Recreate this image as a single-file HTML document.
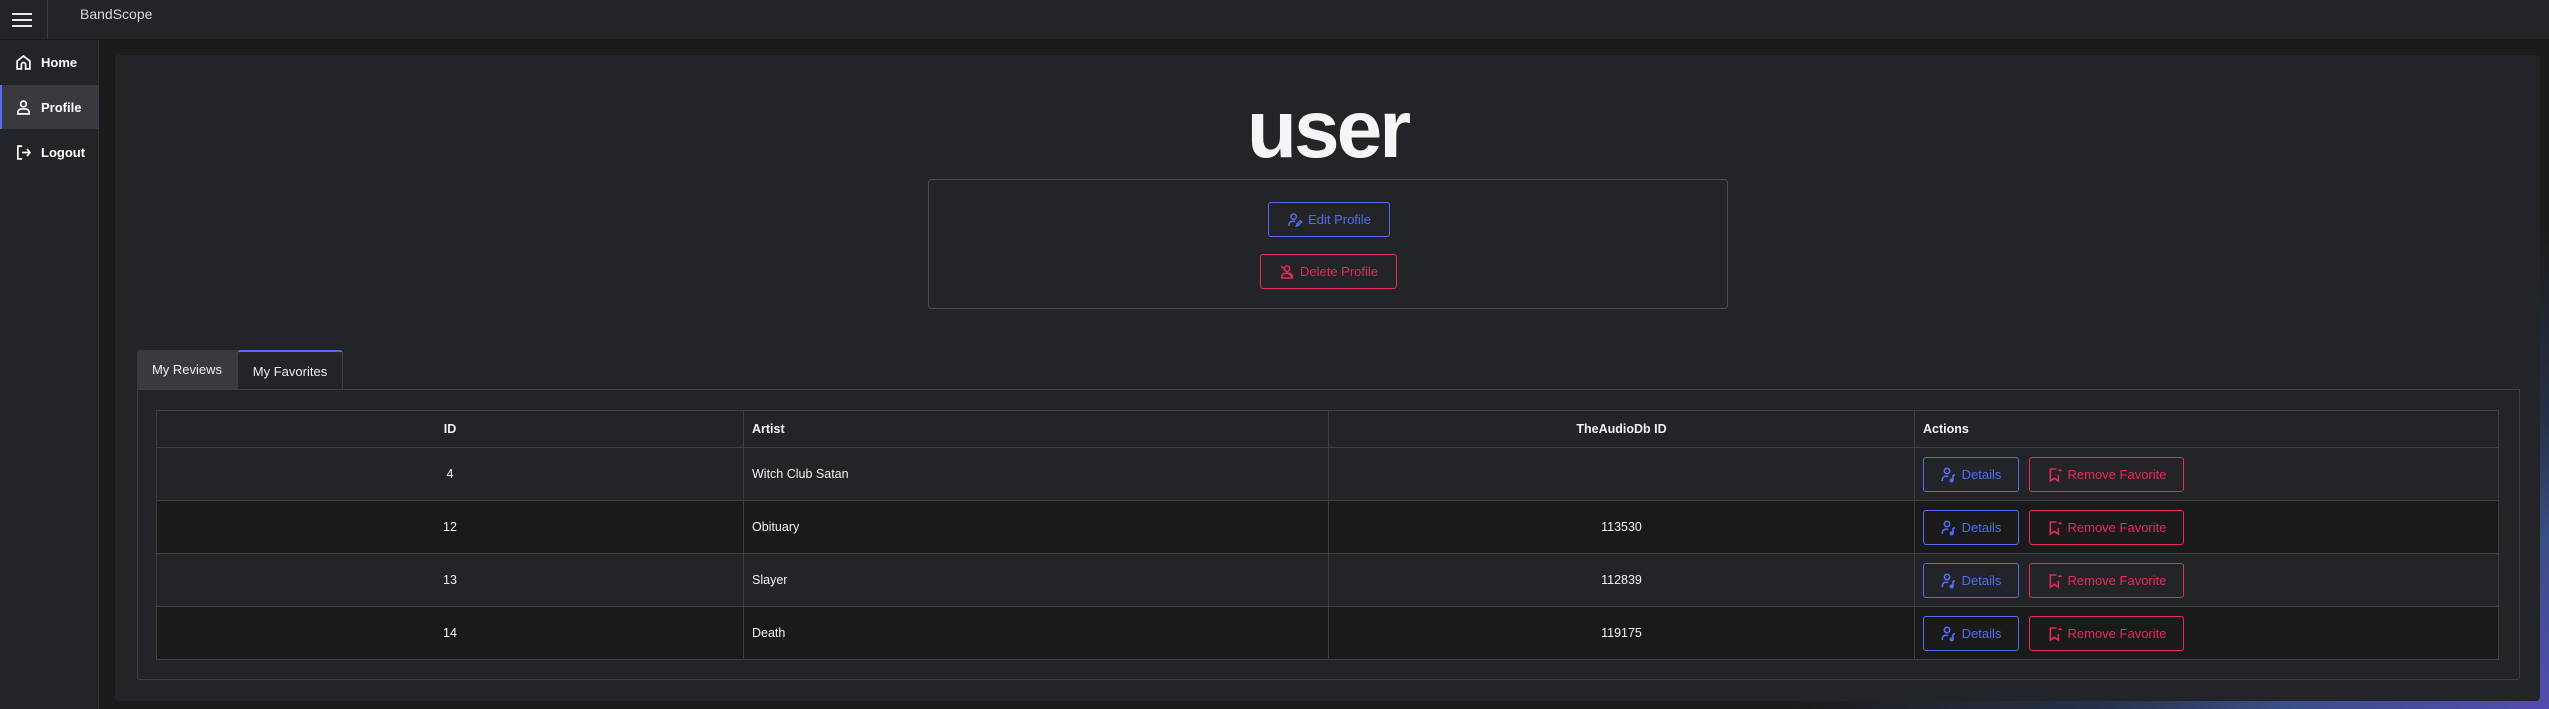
<!DOCTYPE html>
<html><head><meta charset="utf-8"><style>
*{box-sizing:border-box;margin:0;padding:0}
body{width:2549px;height:709px;overflow:hidden;background:#1b1b1b;font-family:"Liberation Sans",sans-serif;color:#f2f2f2;position:relative}
.bg{position:absolute;left:100px;top:39px;right:0;bottom:0;background:radial-gradient(ellipse 760px 480px at 100% 100%,#534bb0 0%,#3a4f86 35%,#263148 60%,rgba(27,27,27,0) 100%),#1b1b1b}
.top{position:absolute;left:0;top:0;width:2549px;height:39px;background:#232427}
.ham{position:absolute;left:12px;top:13px;width:20px}
.ham i{display:block;height:2px;background:#e8e8e8;margin-bottom:4px}
.div{position:absolute;left:47px;top:0;width:1px;height:39px;background:#3a3b3e}
.brand{position:absolute;left:80px;top:6px;font-size:14px;color:#d8d8d8}
.side{position:absolute;left:0;top:40px;width:99px;bottom:0;background:#232427;border-right:1px solid #333}
.item{position:absolute;left:0;width:99px;height:44px;display:flex;align-items:center;font-weight:bold;font-size:13px;color:#fff}
.item svg{position:absolute;left:15px}
.item span{position:absolute;left:41px}
.card{position:absolute;left:115px;top:55px;width:2425px;height:646px;background:#232427;border-radius:4px}
h1{position:absolute;left:0;width:100%;top:34px;text-align:center;font-size:82px;font-weight:bold;line-height:1;letter-spacing:-3px;color:#f5f5f5}
.pbox{position:absolute;left:928px;top:179px;width:800px;height:130px;border:1px solid #4a4a4d;border-radius:4px}
.btn{position:absolute;display:flex;align-items:center;justify-content:center;gap:5px;font-size:13px;border:1px solid;border-radius:3px;background:transparent}
.blue{color:#4f6ef2;border-color:#4f6ef2}
.red{color:#e8285a;border-color:#e8285a}
.tab{position:absolute;top:350px;height:39px;font-size:13px;display:flex;align-items:center;justify-content:center;color:#eee}
.panel{position:absolute;left:137px;top:389px;width:2383px;height:291px;border:1px solid #3f3f42;border-radius:0 0 3px 3px}
table{position:absolute;left:156px;top:410px;width:2343px;border-collapse:collapse;font-size:12.5px}
td,th{border:1px solid #3f3f42;padding:0 8px;height:53px;text-align:left;position:relative}
th{height:37px;font-weight:bold}
tr.o td{background:#232427}tr.e td{background:#1a1a1b}
th{background:#232427}
.c{text-align:center}
</style></head><body>
<div class="bg"></div>
<div class="top"><div class="ham"><i></i><i></i><i></i></div><div class="div"></div><div class="brand">BandScope</div></div>
<div class="side">
<div class="item" style="top:0"><svg width="17" height="17" viewBox="0 0 24 24" fill="none" stroke="#fff" stroke-width="2.4"><path d="M3 10L12 3l9 7v11h-6v-6a3 3 0 0 0-6 0v6H3z"/></svg><span>Home</span></div>
<div class="item" style="top:45px;background:#393a3f;border-left:2px solid #4f6ef2"><svg width="17" height="17" viewBox="0 0 24 24" fill="none" stroke="#fff" stroke-width="2.4" style="left:13px"><circle cx="12" cy="7" r="4"/><path d="M4 21v-2a5 5 0 0 1 5-5h6a5 5 0 0 1 5 5v2z"/></svg><span style="left:39px">Profile</span></div>
<div class="item" style="top:90px"><svg width="17" height="17" viewBox="0 0 24 24" fill="none" stroke="#fff" stroke-width="2.4"><path d="M10 3H4v18h6M10 12h11M17 7l4 5-4 5"/></svg><span>Logout</span></div>
</div>
<div class="card">
<h1>user</h1>
</div>
<div class="pbox"></div>
<div class="btn blue" style="left:1268px;top:202px;width:122px;height:35px"><svg width="16" height="16" viewBox="0 0 24 24" fill="none" stroke="currentColor" stroke-width="2.2"><circle cx="10" cy="7" r="4"/><path d="M3 21v-2a5 5 0 0 1 5-5h4M14 21l1-3 5-5 2 2-5 5z"/></svg>Edit Profile</div>
<div class="btn red" style="left:1260px;top:254px;width:137px;height:35px"><svg width="16" height="16" viewBox="0 0 24 24" fill="none" stroke="currentColor" stroke-width="2.2"><circle cx="12" cy="7" r="4"/><path d="M4 21v-2a5 5 0 0 1 5-5h6a5 5 0 0 1 5 5v2zM3 3l18 18"/></svg>Delete Profile</div>
<div class="tab" style="left:137px;width:100px;background:#393a3f;border-radius:3px 0 0 0">My Reviews</div>
<div class="tab" style="left:237px;width:106px;background:#232427;border:1px solid #3f3f42;border-top:2px solid #4f6ef2;border-bottom:none;border-radius:3px 3px 0 0;height:40px">My Favorites</div>
<div class="panel"></div>
<table>
<tr><th class="c" style="width:587px">ID</th><th style="width:585px">Artist</th><th class="c" style="width:586px">TheAudioDb ID</th><th>Actions</th></tr>
<tr class="o"><td class="c">4</td><td>Witch Club Satan</td><td class="c"></td><td></td></tr>
<tr class="e"><td class="c">12</td><td>Obituary</td><td class="c">113530</td><td></td></tr>
<tr class="o"><td class="c">13</td><td>Slayer</td><td class="c">112839</td><td></td></tr>
<tr class="e"><td class="c">14</td><td>Death</td><td class="c">119175</td><td></td></tr>
</table>
<div id="acts"></div>
<script>
var h='';[457,510,563,616].forEach(function(y){
h+='<div class="btn blue" style="left:1923px;top:'+y+'px;width:96px;height:35px"><svg width="16" height="16" viewBox="0 0 24 24" fill="none" stroke="currentColor" stroke-width="2.4"><circle cx="9" cy="6" r="4"/><path d="M2 21v-2a5 5 0 0 1 5-5h4M18 12v8M18 12h3"/><circle cx="16" cy="20" r="2" fill="currentColor"/></svg>Details</div>';
h+='<div class="btn red" style="left:2029px;top:'+y+'px;width:155px;height:35px"><svg width="16" height="16" viewBox="0 0 24 24" fill="none" stroke="currentColor" stroke-width="2.4"><path d="M14 3H5v18l6-4 6 4v-9M17 5h5"/></svg>Remove Favorite</div>';});
document.getElementById('acts').innerHTML=h;
</script>
</body></html>
